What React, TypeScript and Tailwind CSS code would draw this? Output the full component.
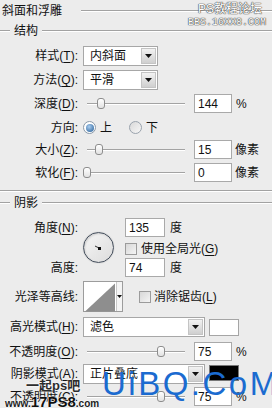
import type { ReactNode } from "react";

const font = "font-['Liberation_Sans','Noto_Sans_CJK_SC',sans-serif]";

function Mn({ k, colon = true }: { k: string; colon?: boolean }) {
  return (
    <>
      (<u className="underline-offset-2">{k}</u>){colon ? ":" : ""}
    </>
  );
}

function Label({ children }: { children: ReactNode }) {
  return <div className="w-[80px] shrink-0 text-right pr-[2px] leading-none">{children}</div>;
}

function Dropdown({ value, width }: { value: string; width: string }) {
  return (
    <div className={`${width} h-[20px] ml-[3px] flex bg-white border border-[#a7a7a7]`}>
      <div className="flex-1 flex items-center pl-[6px] leading-none">{value}</div>
      <div className="w-[15px] m-px flex items-center justify-center border border-[#c4c4c4] bg-gradient-to-b from-[#f2f2f2] to-[#cfcfcf]">
        <svg width="7" height="4" viewBox="0 0 7 4">
          <polygon points="0,0 7,0 3.5,4" fill="#111" />
        </svg>
      </div>
    </div>
  );
}

function Slider({ pos }: { pos: number }) {
  return (
    <div className="relative w-[105px] h-[19px] ml-[3px] flex items-center">
      <div className="ml-[4px] w-[98px] h-[2px] border-t border-[#a3a3a3] border-b border-b-white" />
      <div
        className="absolute top-[4px] w-[8px] h-[11px] rounded-[3px] border border-[#8d8d8d] bg-gradient-to-b from-white to-[#e2e2e2]"
        style={{ left: pos }}
      />
    </div>
  );
}

function NumBox({ value, className = "" }: { value: string; className?: string }) {
  return (
    <div className={`w-[38px] h-[19px] flex items-center pl-[3px] bg-white border border-[#a9a9a9] leading-none ${className}`}>
      {value}
    </div>
  );
}

function Checkbox() {
  return <div className="w-[12px] h-[12px] border border-[#9b9b9b] bg-gradient-to-br from-[#d8d8d8] to-[#f4f4f4]" />;
}

function Etched({ className = "" }: { className?: string }) {
  return <div className={`h-[2px] border-t border-[#a2a2a2] border-b border-b-white ${className}`} />;
}

function GroupHead({ title }: { title: string }) {
  return (
    <div className="h-[18px] flex items-center">
      <Etched className="w-[10px]" />
      <div className="px-[4px] leading-none">{title}</div>
      <Etched className="flex-1" />
    </div>
  );
}

export default function App() {
  return (
    <div className={`relative w-[272px] h-[408px] overflow-hidden bg-[#ececec] text-[12px] text-[#111] ${font}`}>
      <div className="h-[22px] flex items-center">
        <div className="pl-[2px] leading-none">斜面和浮雕</div>
        <Etched className="flex-1 ml-[19px]" />
      </div>

      <GroupHead title="结构" />

      <div className="mt-[6px] h-[20px] flex items-center">
        <Label>样式<Mn k="T" /></Label>
        <Dropdown value="内斜面" width="w-[75px]" />
      </div>
      <div className="mt-[4px] h-[20px] flex items-center">
        <Label>方法<Mn k="Q" /></Label>
        <Dropdown value="平滑" width="w-[75px]" />
      </div>
      <div className="mt-[4px] h-[19px] flex items-center">
        <Label>深度<Mn k="D" /></Label>
        <Slider pos={14} />
        <NumBox value="144" className="ml-[6px]" />
        <span className="ml-[4px] leading-none">%</span>
      </div>
      <div className="mt-[5px] h-[19px] flex items-center">
        <Label>方向:</Label>
        <div className="ml-[3px] w-[13px] h-[13px] rounded-full border border-[#8a99a8] bg-white flex items-center justify-center">
          <div className="w-[8px] h-[8px] rounded-full bg-[radial-gradient(circle_at_40%_35%,#a9cdf0,#245c94)]" />
        </div>
        <span className="ml-[4px] leading-none">上</span>
        <div className="ml-[17px] w-[13px] h-[13px] rounded-full border border-[#9aa3ad] bg-gradient-to-br from-[#d9d9d9] to-[#f7f7f7]" />
        <span className="ml-[4px] leading-none">下</span>
      </div>
      <div className="mt-[3px] h-[19px] flex items-center">
        <Label>大小<Mn k="Z" /></Label>
        <Slider pos={12} />
        <NumBox value="15" className="ml-[6px]" />
        <span className="ml-[3px] leading-none">像素</span>
      </div>
      <div className="mt-[4px] h-[19px] flex items-center">
        <Label>软化<Mn k="F" /></Label>
        <Slider pos={0} />
        <NumBox value="0" className="ml-[6px]" />
        <span className="ml-[3px] leading-none">像素</span>
      </div>

      <Etched className="mt-[8px]" />
      <div className="mt-[2px]">
        <GroupHead title="阴影" />
      </div>

      <div className="mt-[6px] h-[59px] flex">
        <div className="flex flex-col justify-between">
          <div className="h-[19px] flex items-center"><Label>角度<Mn k="N" /></Label></div>
          <div className="h-[19px] flex items-center"><Label>高度:</Label></div>
        </div>
        <div className="ml-[3px] mt-[14px] w-[31px] h-[31px] rounded-full border-[1.5px] border-[#46505e] bg-gradient-to-br from-[#f6f6f6] to-[#dcdcdc] shadow-[inset_1px_1px_2px_rgba(0,0,0,0.15),0_0_1px_rgba(0,0,0,0.3)] flex items-center justify-center">
          <svg width="10" height="10" viewBox="0 0 10 10">
            <line x1="1" y1="3" x2="5" y2="5" stroke="#333" strokeWidth="1" />
            <rect x="4" y="4" width="3" height="3" fill="#111" />
          </svg>
        </div>
        <div className="ml-[11px] flex flex-col">
          <div className="h-[19px] flex items-center">
            <NumBox value="135" className="w-[40px]" />
            <span className="ml-[5px] leading-none">度</span>
          </div>
          <div className="mt-[5px] h-[13px] flex items-center">
            <Checkbox />
            <span className="ml-[4px] leading-none">使用全局光<Mn k="G" colon={false} /></span>
          </div>
          <div className="mt-[3px] h-[19px] flex items-center">
            <NumBox value="74" className="w-[40px]" />
            <span className="ml-[5px] leading-none">度</span>
          </div>
        </div>
      </div>

      <div className="mt-[4px] h-[31px] flex items-center">
        <Label>光泽等高线:</Label>
        <div className="ml-[3px] h-[31px] w-[40px] flex border border-[#9c9c9c] bg-white">
          <svg width="31" height="29" viewBox="0 0 31 29" className="m-px">
            <polygon points="0,29 31,0 31,29" fill="#8e8e8e" />
          </svg>
          <div className="flex-1 flex items-center justify-center border-l border-[#c8c8c8] bg-[#f4f4f4]">
            <svg width="5" height="3" viewBox="0 0 5 3">
              <polygon points="0,0 5,0 2.5,3" fill="#111" />
            </svg>
          </div>
        </div>
        <div className="ml-[16px]">
          <Checkbox />
        </div>
        <span className="ml-[3px] leading-none">消除锯齿<Mn k="L" colon={false} /></span>
      </div>

      <div className="mt-[5px] h-[20px] flex items-center">
        <Label>高光模式<Mn k="H" /></Label>
        <Dropdown value="滤色" width="w-[122px]" />
        <div className="ml-[4px] w-[30px] h-[17px] bg-white border border-[#a5a5a5]" />
      </div>
      <div className="mt-[5px] h-[19px] flex items-center">
        <Label>不透明度<Mn k="O" /></Label>
        <Slider pos={74} />
        <NumBox value="75" className="ml-[6px]" />
        <span className="ml-[4px] leading-none">%</span>
      </div>
      <div className="mt-[3px] h-[20px] flex items-center">
        <Label>阴影模式<Mn k="A" /></Label>
        <Dropdown value="正片叠底" width="w-[122px]" />
        <div className="ml-[4px] w-[30px] h-[16px] self-start mt-[1px] bg-black border border-[#777]" />
      </div>
      <div className="mt-[3px] h-[19px] flex items-center">
        <Label>不透明度<Mn k="C" /></Label>
        <Slider pos={74} />
        <NumBox value="75" className="ml-[6px]" />
        <span className="ml-[4px] leading-none">%</span>
      </div>

      {/* watermarks */}
      <div className="absolute top-[3px] left-[198px] text-[12px] leading-none text-white [text-shadow:0_0_1px_#444,0_0_1px_#444,0_0_1px_#444]">
        PS教程论坛
      </div>
      <div className="absolute top-[18px] left-[188px] text-[10px] leading-none font-['Liberation_Mono',monospace] text-white [text-shadow:0_0_1px_#444,0_0_1px_#444,0_0_1px_#444]">
        BBS.16XX8.COM
      </div>
      <div className="absolute top-[379px] left-[26px] text-[13px] leading-none font-bold text-[#2c2c2c] [text-shadow:0_0_2px_#fff,0_0_2px_#fff]">
        一起ps吧
      </div>
      <div className="absolute top-[394px] left-[5px] flex items-end leading-none font-['Liberation_Sans',sans-serif] font-bold text-[#222] [text-shadow:0_0_2px_#fff,0_0_2px_#fff]">
        <span className="text-[10px]">www.</span>
        <span className="text-[15px] text-[#111] [text-shadow:0_0_1px_#fff,0_0_1px_#fff,0_0_1px_#fff,0_0_1px_#fff]">17PS8</span>
        <span className="text-[10px]">.com</span>
      </div>
      <div className="absolute top-[368px] left-[102px] text-[33px] leading-[32px] font-['Liberation_Sans',sans-serif] text-[#1b6bd0] tracking-[2.5px]">
        UiBQ.CoM
      </div>
    </div>
  );
}
